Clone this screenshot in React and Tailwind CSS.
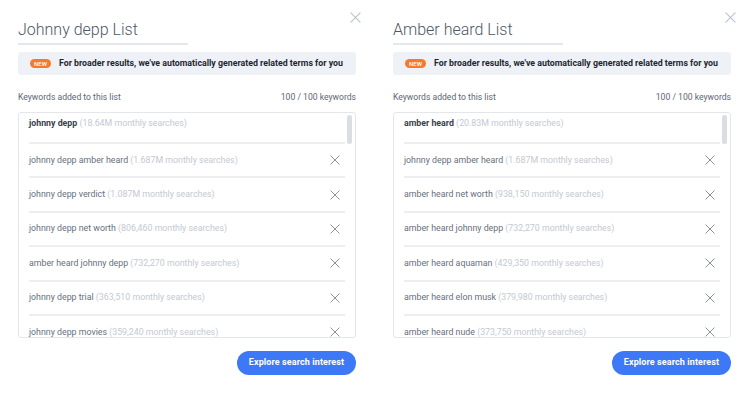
import React from 'react';

const lists = [
  {
    title: 'Johnny depp List',
    rows: [
      ['johnny depp', '18.64M'],
      ['johnny depp amber heard', '1.687M'],
      ['johnny depp verdict', '1.087M'],
      ['johnny depp net worth', '806,460'],
      ['amber heard johnny depp', '732,270'],
      ['johnny depp trial', '363,510'],
      ['johnny depp movies', '359,240'],
    ],
  },
  {
    title: 'Amber heard List',
    rows: [
      ['amber heard', '20.83M'],
      ['johnny depp amber heard', '1.687M'],
      ['amber heard net worth', '938,150'],
      ['amber heard johnny depp', '732,270'],
      ['amber heard aquaman', '429,350'],
      ['amber heard elon musk', '379,980'],
      ['amber heard nude', '373,750'],
    ],
  },
];

const Cross = ({ className }) => (
  <svg viewBox="0 0 12 12" className={className} fill="none" stroke="currentColor" strokeWidth="1.2" strokeLinecap="round">
    <path d="M1 1l10 10M11 1L1 11" />
  </svg>
);

const ListPanel = ({ list }) => (
  <div className="relative w-[375px] shrink-0 pl-[18px] pr-[19px] pt-[19px]">
    {/* close */}
    <button className="absolute right-[14px] top-[12px] text-[#b9c3cd]">
      <Cross className="h-[11px] w-[11px]" />
    </button>

    {/* editable title */}
    <div className="w-[170px] border-b-2 border-[#e4e8ee] pb-[2px] text-[16px] font-light leading-[22px] text-[#4d5766]">
      {list.title}
    </div>

    {/* notice */}
    <div className="mt-[7px] flex h-[23px] items-center gap-[8px] rounded-[3px] bg-[#eef2f6] pl-[12px]">
      <span className="flex h-[9px] items-center rounded-full bg-[#f47b2c] px-[4px] text-[6px] font-medium leading-none text-white">
        NEW
      </span>
      <span className="text-[8.8px] font-bold text-[#1f2733]">
        For broader results, we've automatically generated related terms for you
      </span>
    </div>

    {/* counts */}
    <div className="mt-[16px] flex items-center justify-between text-[8.6px] leading-[12px] text-[#5d6675]">
      <span>Keywords added to this list</span>
      <span>100 / 100 keywords</span>
    </div>

    {/* keyword list */}
    <div className="relative mt-[9px] h-[226px] overflow-hidden rounded-[3px] border border-[#e3e7ec]">
      <div className="absolute right-[3px] top-[2px] h-[29px] w-[5px] rounded-full bg-[#dadde2]" />
      <div className="mx-[10px]">
        {list.rows.map(([kw, n], i) => (
          <div
            key={kw + i}
            className={`flex items-center justify-between border-b-2 border-[#eceef2] ${i === 0 ? 'h-[31px] pb-[7px]' : 'h-[34.4px]'}`}
          >
            <span className="text-[8.8px] text-[#666f7c]">
              <span className={i === 0 ? 'font-bold text-[#38414e]' : ''}>{kw}</span>
              <span className="text-[#c3c9d1]"> ({n} monthly searches)</span>
            </span>
            {i > 0 && <Cross className="mr-[5px] h-[10px] w-[10px] text-[#8a929d]" />}
          </div>
        ))}
      </div>
    </div>

    {/* action */}
    <div className="mt-[13px] flex justify-end">
      <button className="h-[24px] w-[119px] rounded-full bg-[#3d78f7] text-[9px] font-bold tracking-[0.1px] text-white">
        Explore search interest
      </button>
    </div>
  </div>
);

export default function App() {
  return (
    <div className="flex h-[400px] w-[750px] bg-white font-['Roboto',sans-serif]">
      {lists.map((l) => (
        <ListPanel key={l.title} list={l} />
      ))}
    </div>
  );
}
